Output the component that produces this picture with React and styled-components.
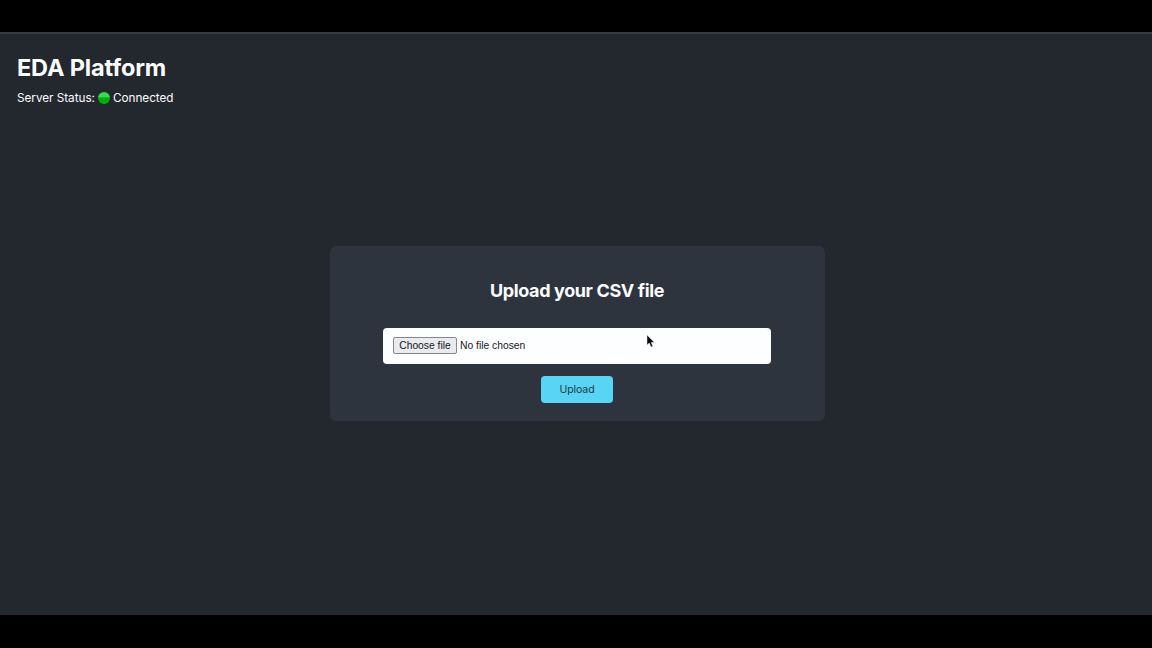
import React from "react";
import styled, { createGlobalStyle } from "styled-components";

const GlobalStyle = createGlobalStyle`
  * { box-sizing: border-box; }
  body { margin: 0; background: #000; }
`;

const Screen = styled.div`
  position: relative;
  height: 648px;
  padding: 32px 0 33px;
  display: flex;
  background: #000;
  overflow: hidden;
  font-family: Inter, "Liberation Sans", sans-serif;
  color: #fcfdfe;
`;

const Page = styled.div`
  flex: 1;
  display: flex;
  flex-direction: column;
  background: #23272e;
  border-top: 2px solid #393c41;
`;

const Header = styled.header`
  height: 104px;
  padding: 18px 17px 0;
`;

const Title = styled.h1`
  margin: 0;
  font-size: 23.5px;
  line-height: 32px;
  font-weight: 700;
  letter-spacing: -0.15px;
`;

const Status = styled.p`
  display: flex;
  align-items: center;
  margin: 5px 0 0;
  font-size: 11.75px;
  line-height: 18px;
  letter-spacing: -0.03px;
`;

const StatusDot = styled.span`
  width: 12px;
  height: 12px;
  margin: 0 3px;
  border-radius: 50%;
  background: linear-gradient(#32de50 0 42%, #08ab0d 48%);
`;

const Main = styled.main`
  display: flex;
  justify-content: center;
  padding: 108px 0 0 3px;
`;

const Card = styled.form`
  width: 495px;
  height: 175px;
  padding: 32px 54px 0 53px;
  display: flex;
  flex-direction: column;
  align-items: center;
  border-radius: 6px;
  background: #2e343e;
`;

const Heading = styled.h2`
  margin: 0 0 25px;
  font-size: 18px;
  line-height: 25px;
  font-weight: 650;
  letter-spacing: -0.38px;
  white-space: nowrap;
`;

const FileField = styled.div`
  width: 100%;
  height: 36px;
  flex: none;
  padding: 0 0 1px 10px;
  display: flex;
  align-items: center;
  gap: 3px;
  border-radius: 4px;
  background: #fdfeff;
  color: #16181c;
  font: 10.3px "Liberation Sans", Arial, sans-serif;
`;

const FileName = styled.span`
  padding-bottom: 1px;
`;

const ChooseButton = styled.button`
  width: 64px;
  height: 17px;
  padding: 0;
  border: 1px solid #85878d;
  border-radius: 2px;
  background: #e9ebee;
  color: #16181c;
  font: inherit;
  line-height: 15px;
  white-space: nowrap;
`;

const UploadButton = styled.button`
  width: 72px;
  height: 27px;
  margin-top: 12px;
  padding: 0 0 1px;
  border: 0;
  border-radius: 4px;
  background: #58d4f5;
  color: #233b49;
  font: 10.6px Inter, "Liberation Sans", sans-serif;
  letter-spacing: -0.1px;
`;

const Pointer = styled.svg`
  position: absolute;
  left: 646px;
  top: 334px;
  width: 9px;
  height: 14px;
`;

export default function App() {
  return (
    <>
      <GlobalStyle />
      <Screen>
        <Page>
          <Header>
            <Title>EDA Platform</Title>
            <Status>
              <span>Server Status:</span>
              <StatusDot />
              <span>Connected</span>
            </Status>
          </Header>
          <Main>
            <Card onSubmit={(e) => e.preventDefault()}>
              <Heading>Upload your CSV file</Heading>
              <FileField>
                <ChooseButton type="button">Choose file</ChooseButton>
                <FileName>No file chosen</FileName>
              </FileField>
              <UploadButton type="submit">Upload</UploadButton>
            </Card>
          </Main>
        </Page>
        <Pointer viewBox="0 0 9 14" aria-hidden="true">
          <path
            d="M1 1 L1 11 L3.3 9 L5 13 L6.8 12.2 L5.2 8.4 L8.2 8.2 Z"
            fill="#08090b"
            stroke="#e3e5e8"
            strokeWidth="0.5"
          />
        </Pointer>
      </Screen>
    </>
  );
}
